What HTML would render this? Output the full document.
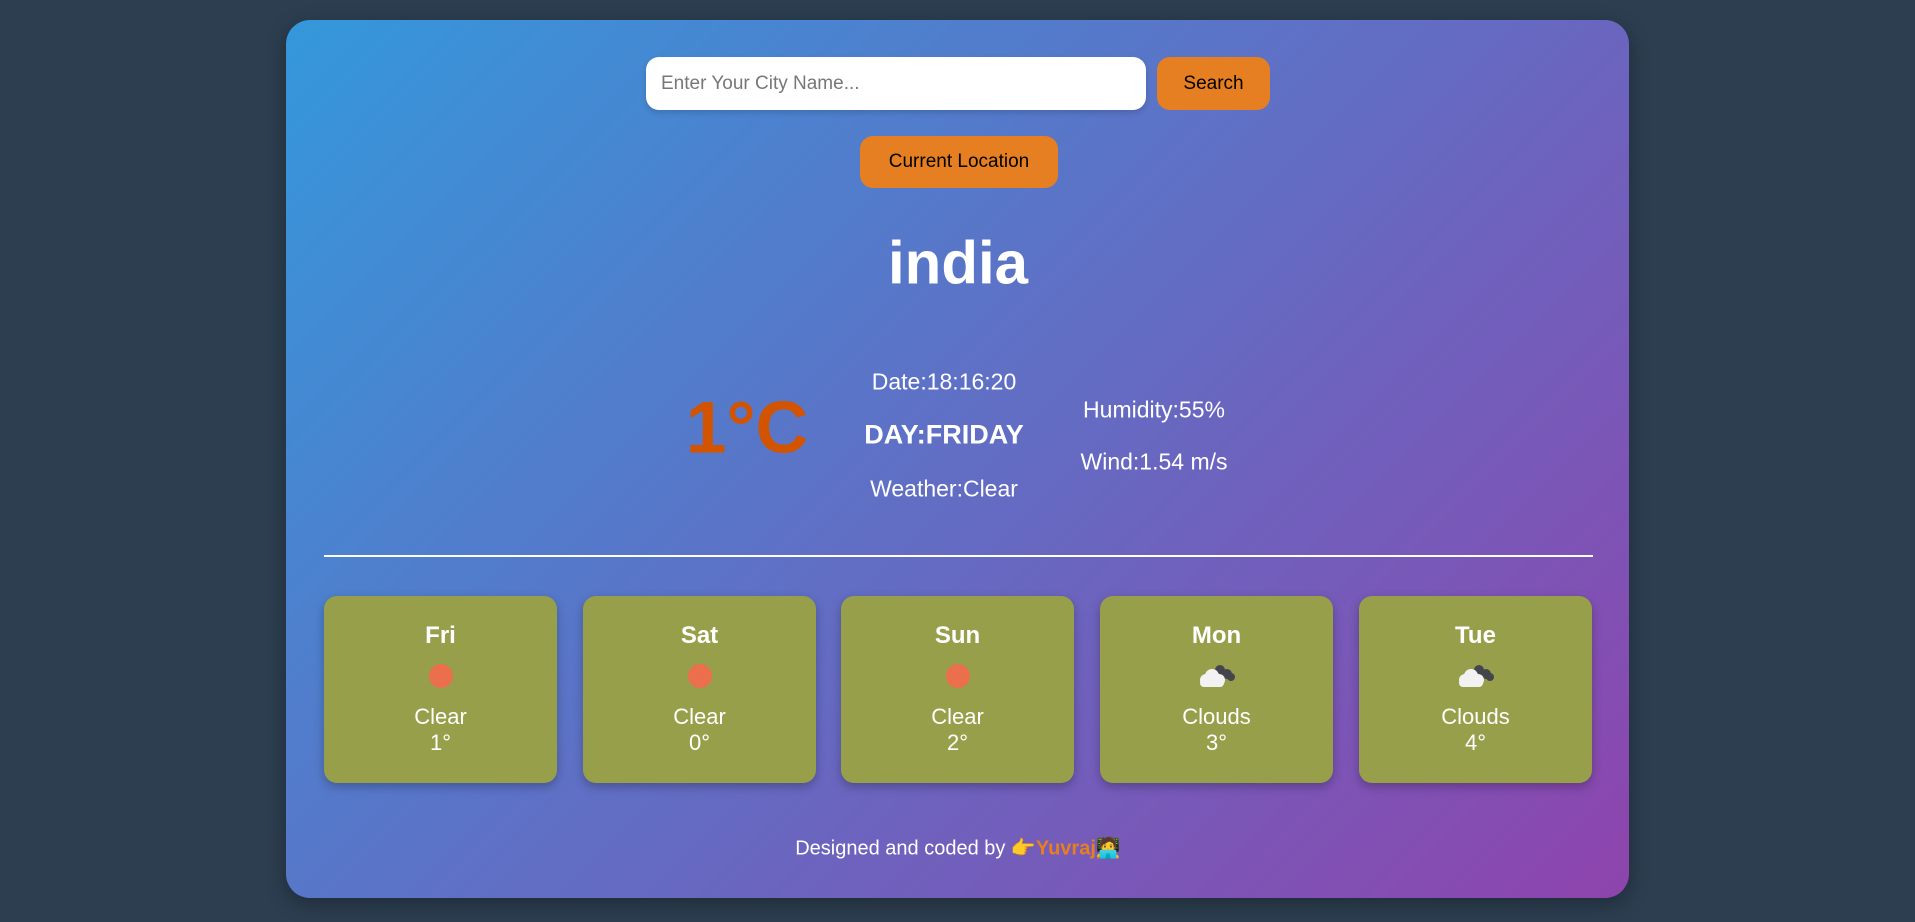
<!DOCTYPE html>
<html><head><meta charset="utf-8"><style>
*{margin:0;padding:0;box-sizing:border-box}
body{width:1915px;height:922px;background:#2c3e50;font-family:"Liberation Sans",Arial,sans-serif;position:relative;overflow:hidden}
.c{position:absolute;left:286px;top:20px;width:1343px;height:878px;border-radius:24px;background:linear-gradient(135deg,#3498db,#8e44ad);box-shadow:0 6px 20px rgba(0,0,0,.3)}
.a{position:absolute}
.inp{left:360px;top:37px;width:500px;height:53px;background:#fff;border-radius:13px;color:#777;font-size:19px;line-height:53px;padding-left:15px;box-shadow:0 3px 6px rgba(0,0,0,.15)}
.btn{background:#e67e22;border-radius:13px;color:#000;font-size:19px;text-align:center}
.t{color:#fff;text-align:center;white-space:nowrap;transform:translate(-50%,-50%)}
.card{top:576px;width:233px;height:187px;background:#989f4a;border-radius:13px;box-shadow:0 4px 10px rgba(0,0,0,.25);color:#fff;text-align:center}
.card .d{position:absolute;top:26px;width:100%;font-weight:bold;font-size:24px}
.card .i{position:absolute;top:67px;left:104px}
.card .w{position:absolute;top:108px;width:100%;font-size:22px;line-height:26px}
</style></head><body>
<div class="c">
<div class="a inp">Enter Your City Name...</div>
<div class="a btn" style="left:871px;top:37px;width:113px;height:53px;line-height:53px">Search</div>
<div class="a btn" style="left:574px;top:116px;width:198px;height:52px;line-height:52px">Current Location</div>
<div class="a t" style="left:672px;top:243px;font-size:60px;font-weight:bold">india</div>
<div class="a t" style="left:461px;top:408px;font-size:73px;font-weight:bold;color:#d35400">1°C</div>
<div class="a t" style="left:658px;top:362px;font-size:23px">Date:18:16:20</div>
<div class="a t" style="left:658px;top:415px;font-size:27px;font-weight:bold">DAY:FRIDAY</div>
<div class="a t" style="left:658px;top:469px;font-size:23px">Weather:Clear</div>
<div class="a t" style="left:868px;top:390px;font-size:23px">Humidity:55%</div>
<div class="a t" style="left:868px;top:442px;font-size:23px">Wind:1.54 m/s</div>
<div class="a" style="left:38px;top:535px;width:1269px;height:2px;background:#fff"></div>

<div class="a card" style="left:38px"><div class="d">Fri</div><svg class="i" width="26" height="26"><circle cx="13" cy="13" r="12" fill="#ec6f4d"/></svg><div class="w">Clear<br>1°</div></div>
<div class="a card" style="left:297px"><div class="d">Sat</div><svg class="i" width="26" height="26"><circle cx="13" cy="13" r="12" fill="#ec6f4d"/></svg><div class="w">Clear<br>0°</div></div>
<div class="a card" style="left:555px"><div class="d">Sun</div><svg class="i" width="26" height="26"><circle cx="13" cy="13" r="12" fill="#ec6f4d"/></svg><div class="w">Clear<br>2°</div></div>
<div class="a card" style="left:814px"><div class="d">Mon</div><svg class="i" style="left:98px" width="38" height="26"><g fill="#44454d"><circle cx="22" cy="7" r="5"/><circle cx="29" cy="11" r="5"/><circle cx="33" cy="14" r="4"/></g><g fill="#f2f2f2"><circle cx="14" cy="13" r="7"/><circle cx="8" cy="17" r="6"/><circle cx="21" cy="17" r="6"/><rect x="2" y="16" width="24" height="8" rx="4"/></g></svg><div class="w">Clouds<br>3°</div></div>
<div class="a card" style="left:1073px"><div class="d">Tue</div><svg class="i" style="left:98px" width="38" height="26"><g fill="#44454d"><circle cx="22" cy="7" r="5"/><circle cx="29" cy="11" r="5"/><circle cx="33" cy="14" r="4"/></g><g fill="#f2f2f2"><circle cx="14" cy="13" r="7"/><circle cx="8" cy="17" r="6"/><circle cx="21" cy="17" r="6"/><rect x="2" y="16" width="24" height="8" rx="4"/></g></svg><div class="w">Clouds<br>4°</div></div>

<div class="a t" style="left:672px;top:828px;font-size:20px">Designed and coded by <span style="color:#f5b82e">👉</span><b style="color:#e67e22">Yuvraj</b><span style="color:#d9a040">🧑‍💻</span></div>
</div>
</body></html>
